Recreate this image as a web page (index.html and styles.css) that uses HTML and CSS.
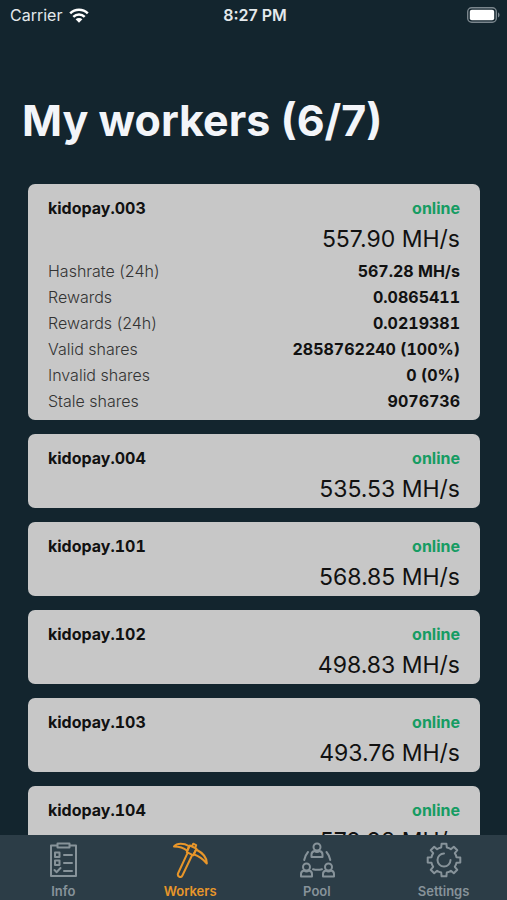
FILE: index.html
```html
<!DOCTYPE html>
<html lang="en">
<head>
    <meta charset="UTF-8">
    <meta name="viewport" content="width=device-width, initial-scale=1.0">
    <title>My workers</title>
    <link rel="stylesheet" href="styles.css">
</head>
<body>
    <div class="app">
        <header class="status-bar">
            <div class="carrier">
                <span>Carrier</span>
                <svg class="wifi" viewBox="0 0 20 15" aria-hidden="true">
                    <path d="M1.2 5.4a12.6 12.6 0 0 1 17.6 0M4.3 8.8a8.2 8.2 0 0 1 11.4 0" fill="none" stroke="currentColor" stroke-width="2.5"/>
                    <path d="M10 14.8l-3.4-3.5a4.8 4.8 0 0 1 6.8 0z" fill="currentColor"/>
                </svg>
            </div>
            <time class="clock">8:27 PM</time>
            <svg class="battery" viewBox="0 0 33 16" aria-hidden="true">
                <rect x="0.7" y="0.7" width="28.6" height="14.6" rx="4" fill="none" stroke="#7b868d" stroke-width="1.4"/>
                <rect x="2.8" y="2.8" width="24.4" height="10.4" rx="2" fill="#fff"/>
                <path d="M31 5.6c2 .6 2 4.2 0 4.8z" fill="#7b868d"/>
            </svg>
        </header>

        <main class="content">
            <h1>My workers (6/7)</h1>
            <div class="workers">
                <article class="card">
                    <div class="card-head">
                        <h2>kidopay.003</h2>
                        <span class="status">online</span>
                    </div>
                    <p class="rate">557.90 MH/s</p>
                    <dl class="details">
                        <div><dt>Hashrate (24h)</dt><dd>567.28 MH/s</dd></div>
                        <div><dt>Rewards</dt><dd>0.0865411</dd></div>
                        <div><dt>Rewards (24h)</dt><dd>0.0219381</dd></div>
                        <div><dt>Valid shares</dt><dd>2858762240 (100%)</dd></div>
                        <div><dt>Invalid shares</dt><dd>0 (0%)</dd></div>
                        <div><dt>Stale shares</dt><dd>9076736</dd></div>
                    </dl>
                </article>
                <article class="card">
                    <div class="card-head">
                        <h2>kidopay.004</h2>
                        <span class="status">online</span>
                    </div>
                    <p class="rate">535.53 MH/s</p>
                </article>
                <article class="card">
                    <div class="card-head">
                        <h2>kidopay.101</h2>
                        <span class="status">online</span>
                    </div>
                    <p class="rate">568.85 MH/s</p>
                </article>
                <article class="card">
                    <div class="card-head">
                        <h2>kidopay.102</h2>
                        <span class="status">online</span>
                    </div>
                    <p class="rate">498.83 MH/s</p>
                </article>
                <article class="card">
                    <div class="card-head">
                        <h2>kidopay.103</h2>
                        <span class="status">online</span>
                    </div>
                    <p class="rate">493.76 MH/s</p>
                </article>
                <article class="card">
                    <div class="card-head">
                        <h2>kidopay.104</h2>
                        <span class="status">online</span>
                    </div>
                    <p class="rate">579.98 MH/s</p>
                </article>
            </div>
        </main>

        <nav class="tab-bar">
            <a class="tab" href="#info">
                <svg viewBox="0 0 36 36" aria-hidden="true">
                    <path d="M12 3.500H6v30.500h25V3.500H25"/>
                    <path d="M12.500 1.500h12v4h-12z"/>
                    <path d="M10 10.500h4.500v4.500H10zM10 18.500h4.500v4.500H10zM9.500 28l2 2.200 4-4.200M19 13H27M19 21H27M19 29H27"/>
                </svg>
                <span>Info</span>
            </a>
            <a class="tab active" href="#workers" aria-current="page">
                <svg viewBox="0 0 36 36" aria-hidden="true">
                    <path d="M17 4.200C11.500 1 5 1 2 4.500c5.500 0 9.500 1.200 13.200 4.200z"/>
                    <path d="M24.200 7.500c6.300 3.300 10.800 8.500 10.600 14-3.300-4-7.600-7.200-13.200-9.200z"/>
                    <path d="M17.800 3.500l6.600 3.200-3 6.600-6.600-3.200zM20 4.200l1.200-2.500 3 1.400-1 2.800"/>
                    <path d="M15.600 10.800L6 31.500c-1 3.200 3 4.800 4.400 2L20.200 13"/>
                </svg>
                <span>Workers</span>
            </a>
            <a class="tab" href="#pool">
                <svg viewBox="0 0 36 36" aria-hidden="true">
                    <circle cx="18" cy="5" r="3.500"/>
                    <path d="M12.500 15v-2.500q0-2.800 3-3.500q2.500 2 5 0q3 .7 3 3.500V15z"/>
                    <circle cx="7.500" cy="25" r="3.500"/>
                    <path d="M2 34.500V32q0-2.800 3-3.500q2.500 2 5 0q3 .7 3 3.500v2.500z"/>
                    <circle cx="29.500" cy="25" r="3.500"/>
                    <path d="M24 34.500V32q0-2.800 3-3.500q2.500 2 5 0q3 .7 3 3.500v2.500z"/>
                    <path d="M9 10q-3 3.500-3.800 8M27.500 10q3 3.500 3.800 8M14 27.200q4.500 1.200 9 0"/>
                </svg>
                <span>Pool</span>
            </a>
            <a class="tab" href="#settings">
                <svg viewBox="0 0 36 36" aria-hidden="true">
                    <path d="M30.500 15.200L34.300 15.600V20.400L30.500 20.800Q30 23 28.800 24.900L31.300 27.800 27.800 31.300 24.900 28.800Q23 30 20.800 30.500L20.400 34.300H15.600L15.200 30.500Q13 30 11.100 28.800L8.200 31.300 4.700 27.800 7.200 24.900Q6 23 5.500 20.800L1.700 20.400V15.600L5.500 15.200Q6 13 7.200 11.100L4.700 8.200 8.200 4.700 11.100 7.200Q13 6 15.200 5.500L15.600 1.700H20.400L20.800 5.500Q23 6 24.900 7.200L27.800 4.700 31.300 8.200 28.800 11.100Q30 13 30.500 15.200z"/>
                    <path d="M18 11.500a6.500 6.500 0 1 0 6.500 6.500"/>
                </svg>
                <span>Settings</span>
            </a>
        </nav>
    </div>
</body>
</html>
```
FILE: styles.css
```css
:root {
    --bg: #13252e;
    --card: #c7c7c7;
    --green: #169c63;
    --orange: #e8962a;
    --muted: #87939a;
}

* {
    box-sizing: border-box;
}

body, h1, h2, p, dl, dd {
    margin: 0;
}

body {
    font-family: Inter, "Liberation Sans", sans-serif;
    background: var(--bg);
    color: #111;
}

.app {
    display: flex;
    flex-direction: column;
    height: 100vh;
}

.status-bar {
    display: grid;
    grid-template-columns: 1fr auto 1fr;
    align-items: center;
    padding: 0 7px 0 10px;
    height: 30px;
    flex: none;
    font-size: 16px;
    color: #e4e9ec;
}

.carrier {
    display: flex;
    align-items: center;
    gap: 7px;
}

.wifi {
    width: 20px;
    height: 15px;
    color: #fff;
}

.clock {
    font-weight: 600;
}

.battery {
    width: 33px;
    height: 16px;
    justify-self: end;
}

.content {
    flex: 1;
    min-height: 0;
    overflow-y: auto;
    scrollbar-width: none;
    padding: 60px 27px 14px 28px;
}

h1 {
    margin-left: -6px;
    font-size: 43px;
    line-height: 60px;
    font-weight: 700;
    color: #f3f5f9;
}

.workers {
    display: flex;
    flex-direction: column;
    gap: 14px;
    margin-top: 34px;
}

.card {
    display: flex;
    flex-direction: column;
    gap: 4px;
    padding: 12px 20px 4px;
    background: var(--card);
    border-radius: 7px;
}

.card-head, .details div {
    display: flex;
    justify-content: space-between;
}

.card-head {
    font-size: 16px;
    line-height: 24px;
    font-weight: 700;
    font-variant-numeric: tabular-nums;
}

.card-head h2 {
    font-size: 16px;
}

.status {
    color: var(--green);
}

.rate {
    font-size: 23px;
    line-height: 30px;
    text-align: right;
}

.details {
    padding-bottom: 2px;
    font-size: 16px;
    line-height: 26px;
}

.details dt {
    font-weight: 350;
    color: #333;
}

.details dd {
    font-weight: 700;
    font-variant-numeric: tabular-nums;
}

.tab-bar {
    display: grid;
    grid-template-columns: repeat(4, 1fr);
    flex: none;
    height: 65px;
    background: #2c3d47;
}

.tab {
    display: flex;
    flex-direction: column;
    align-items: center;
    gap: 4px;
    padding-top: 7px;
    font-size: 13px;
    line-height: 18px;
    font-weight: 600;
    color: var(--muted);
    text-decoration: none;
}

.tab.active {
    color: var(--orange);
}

.tab svg {
    width: 36px;
    height: 36px;
    fill: none;
    stroke: currentColor;
    stroke-width: 2;
    stroke-linecap: round;
    stroke-linejoin: round;
}
```
